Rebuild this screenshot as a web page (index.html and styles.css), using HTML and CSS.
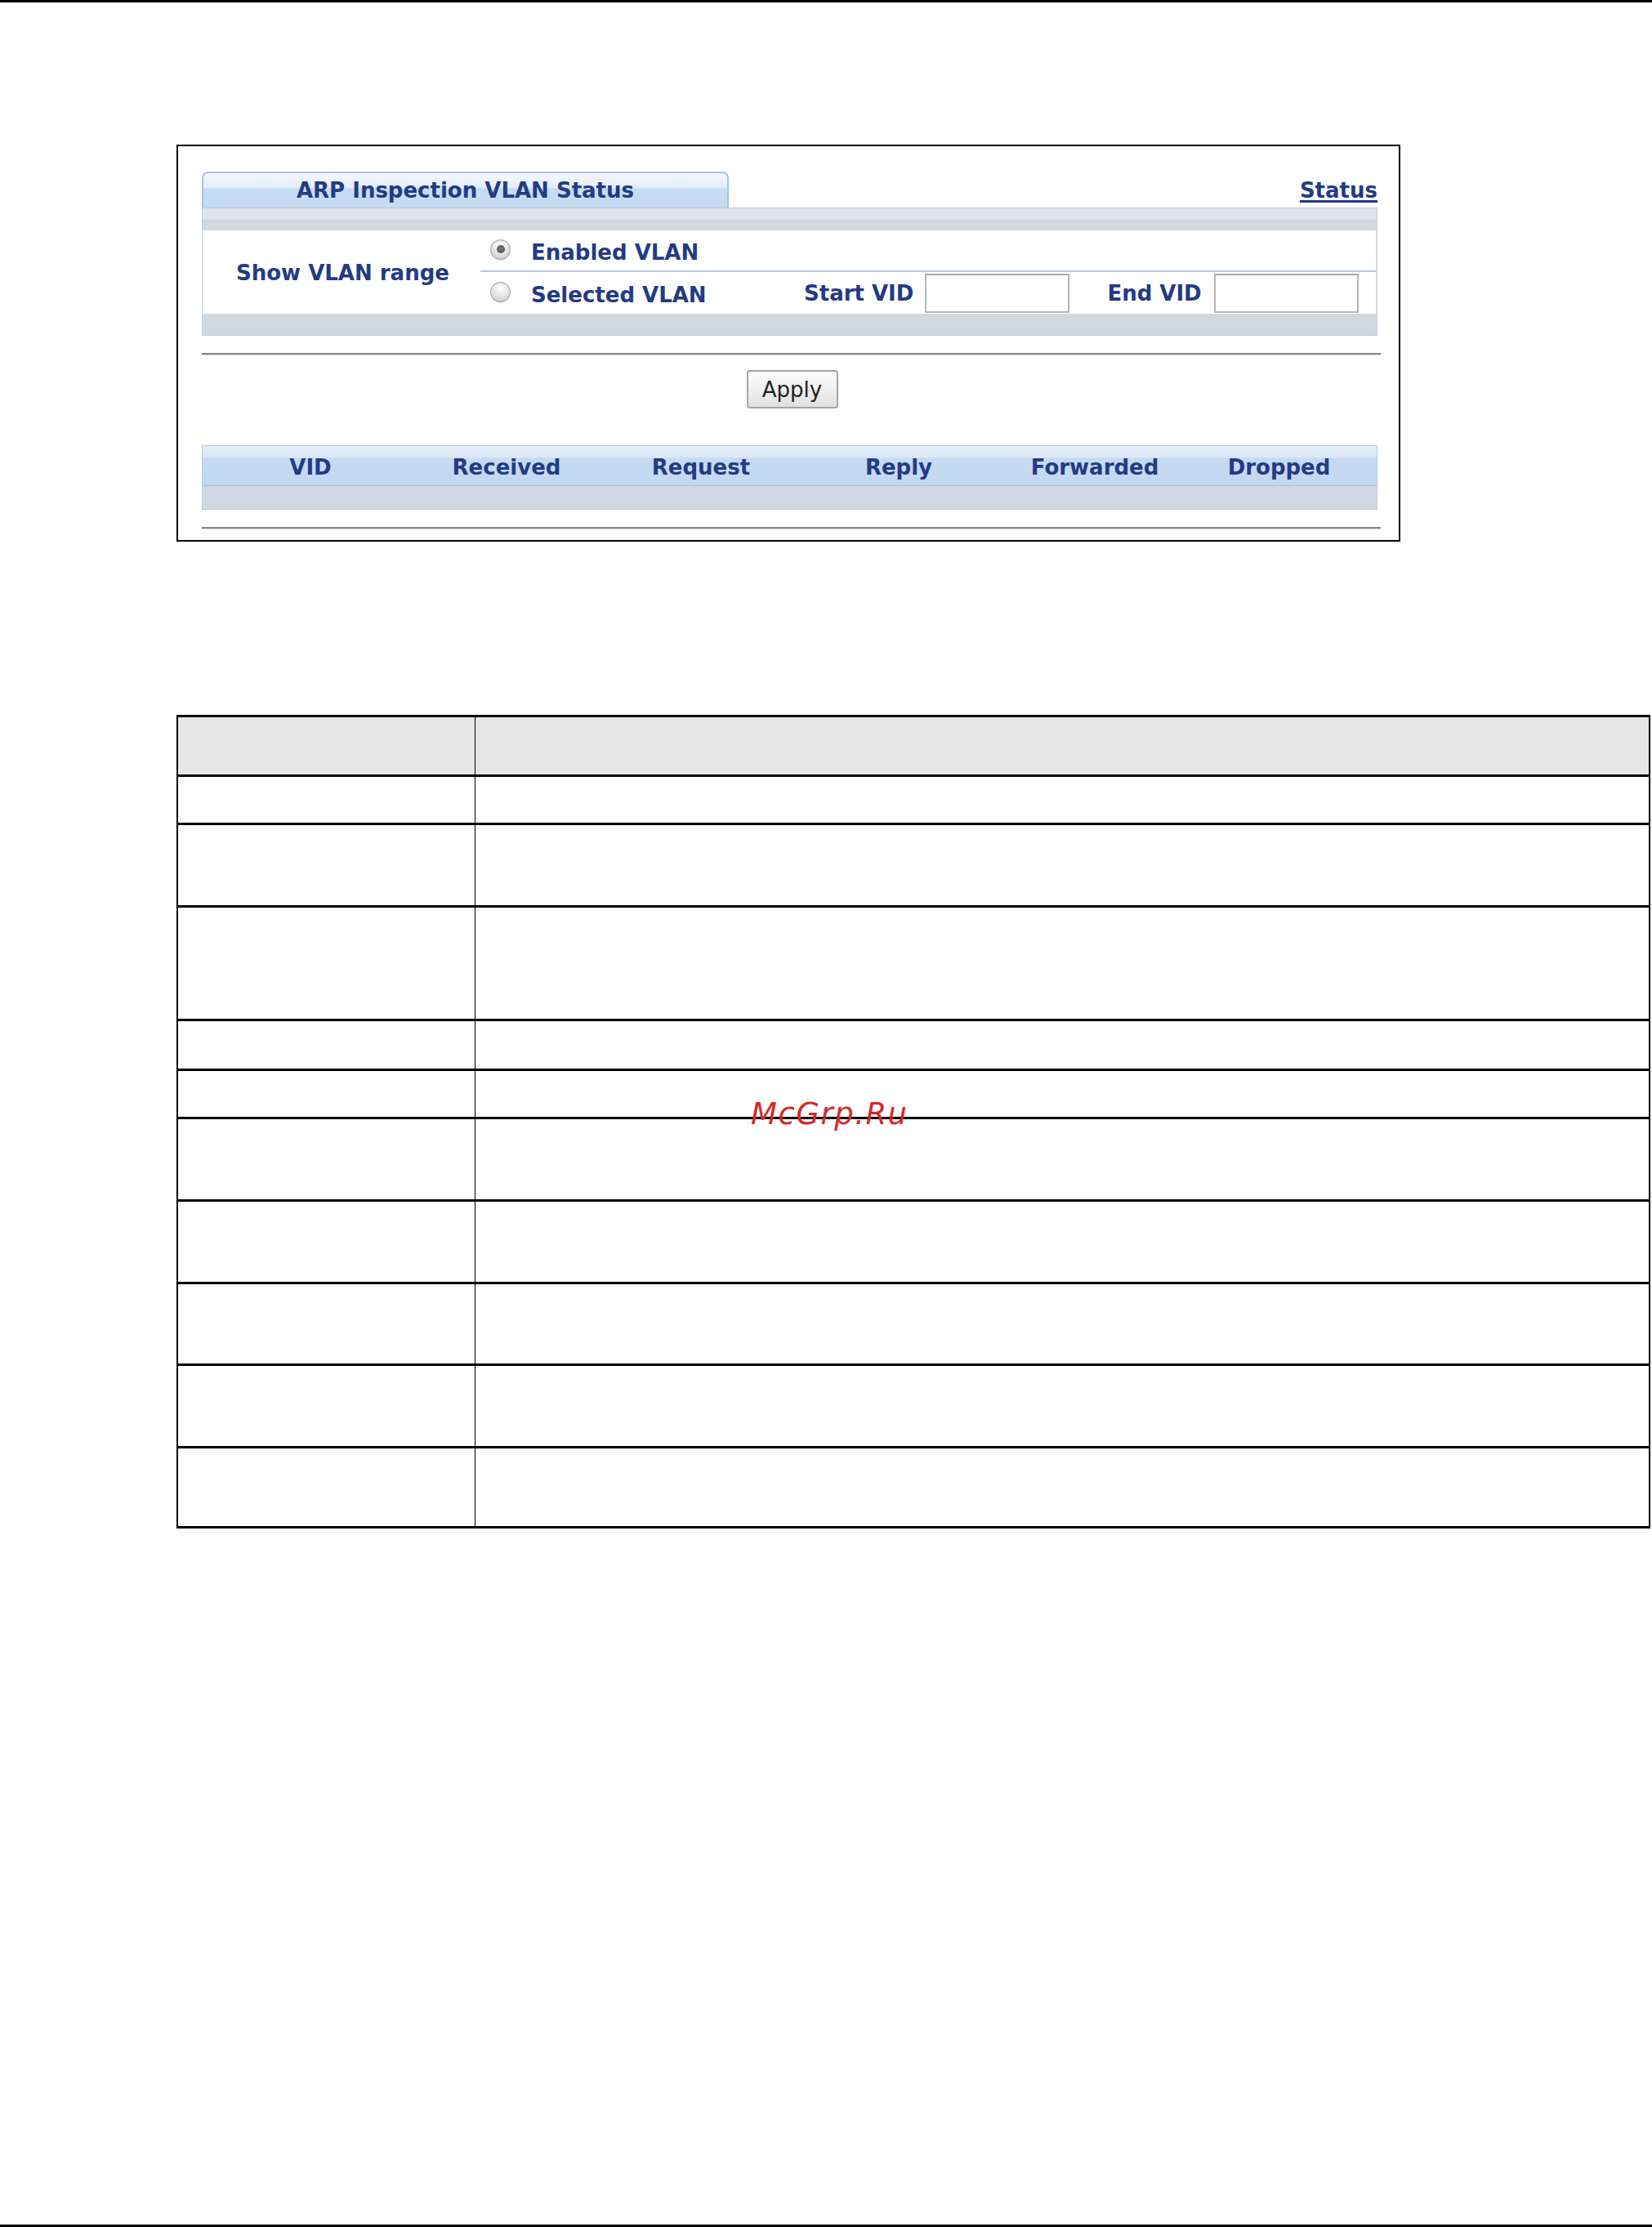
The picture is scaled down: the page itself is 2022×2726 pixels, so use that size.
FILE: index.html
```html
<!DOCTYPE html>
<html lang="en">
<head>
<meta charset="utf-8">
<title>ARP Inspection VLAN Status</title>
<link rel="stylesheet" href="styles.css">
</head>
<body>
<div class="page">
  <div class="top-rule"></div>

  <div class="shot">
    <div class="tabrow">
      <div class="tab">ARP Inspection VLAN Status</div>
      <a class="status-link" href="#">Status</a>
    </div>
    <div class="band"></div>
    <div class="form">
      <div class="form-label">Show VLAN range</div>
      <div class="form-opts">
        <div class="opt opt-first">
          <span class="radio on"></span>
          <span class="opt-text">Enabled VLAN</span>
        </div>
        <div class="opt opt-second">
          <span class="radio"></span>
          <span class="opt-text wide">Selected VLAN</span>
          <span class="field-label">Start VID</span>
          <span class="input"></span>
          <span class="field-label end">End VID</span>
          <span class="input"></span>
        </div>
      </div>
    </div>
    <div class="band-bottom"></div>
    <div class="rule"></div>
    <div class="actions"><button class="btn" type="button">Apply</button></div>
    <div class="list-head">
      <div class="col">VID</div>
      <div class="col">Received</div>
      <div class="col">Request</div>
      <div class="col">Reply</div>
      <div class="col">Forwarded</div>
      <div class="col last">Dropped</div>
    </div>
    <div class="list-empty"></div>
    <div class="rule rule-end"></div>
  </div>

  <div class="doc-table">
    <div class="row head h73"><div class="cell"></div><div class="cell"></div></div>
    <div class="row h59"><div class="cell"></div><div class="cell"></div></div>
    <div class="row h101"><div class="cell"></div><div class="cell"></div></div>
    <div class="row h139"><div class="cell"></div><div class="cell"></div></div>
    <div class="row h61"><div class="cell"></div><div class="cell"></div></div>
    <div class="row h59"><div class="cell"></div><div class="cell"></div></div>
    <div class="row h101"><div class="cell"></div><div class="cell"></div></div>
    <div class="row h101"><div class="cell"></div><div class="cell"></div></div>
    <div class="row h100"><div class="cell"></div><div class="cell"></div></div>
    <div class="row h101"><div class="cell"></div><div class="cell"></div></div>
    <div class="row h98"><div class="cell"></div><div class="cell"></div></div>
    <div class="watermark">McGrp.Ru</div>
  </div>

  <div class="bottom-rule"></div>
</div>
</body>
</html>
```

FILE: styles.css
```css
html, body {
  margin: 0;
  padding: 0;
  background: #ffffff;
}

.page {
  height: 2726px;
  display: flex;
  flex-direction: column;
  overflow: hidden;
  font-family: "DejaVu Sans", Verdana, sans-serif;
}

.top-rule {
  height: 3px;
  background: #000;
  flex: none;
}

.bottom-rule {
  height: 3px;
  background: #000;
  margin-top: auto;
  flex: none;
}

/* ---------- embedded UI screenshot ---------- */
.shot {
  flex: none;
  margin-top: 174px;
  margin-left: 216px;
  width: 1498px;
  box-sizing: border-box;
  border: 2px solid #000;
  padding: 31px 26px 13px 29px;
  color: #233b84;
  font-size: 26px;
  font-weight: bold;
}

.tabrow {
  display: flex;
  justify-content: space-between;
  align-items: flex-end;
  height: 44px;
}

.tab {
  width: 645px;
  height: 44px;
  box-sizing: border-box;
  border: 2px solid #a9c3e3;
  border-bottom: 0;
  border-radius: 8px 8px 0 0;
  background: linear-gradient(to bottom, #f6f9fd 0%, #e2ecf8 42%, #c7dcf4 46%, #c5daf3 100%);
  text-align: center;
  line-height: 40px;
  padding-top: 1px;
  white-space: nowrap;
}

.status-link {
  color: #233b84;
  text-decoration: underline;
  text-decoration-thickness: 3px;
  text-underline-offset: 3px;
  line-height: 40px;
  margin-bottom: 1px;
}

.band {
  height: 28px;
  box-sizing: border-box;
  border: 1px solid #c3ccd8;
  border-bottom: 0;
  background: linear-gradient(to bottom, #dfe4eb 0%, #dfe4eb 48%, #d0d8e2 52%, #d0d8e2 100%);
}

.form {
  display: flex;
  height: 102px;
  box-sizing: border-box;
  border-left: 1px solid #c8d1dc;
  border-right: 2px solid #d3dae3;
  background: #fff;
}

.form-label {
  width: 340px;
  box-sizing: border-box;
  padding-left: 41px;
  padding-top: 2px;
  display: flex;
  align-items: center;
  white-space: nowrap;
}

.form-opts {
  flex: 1;
  display: flex;
  flex-direction: column;
}

.opt {
  display: flex;
  align-items: center;
  padding-left: 12px;
  box-sizing: border-box;
  white-space: nowrap;
}

.opt-first {
  height: 51px;
  border-bottom: 2px solid #b8c7da;
}

.opt-second {
  height: 51px;
}

.opt-text {
  margin-left: 25px;
  line-height: 30px;
  padding-top: 4px;
}

.opt-text.wide {
  flex: 0 0 334px;
}

.radio {
  flex: none;
  width: 25px;
  height: 25px;
  box-sizing: border-box;
  border-radius: 50%;
  border: 1px solid #9c9c9c;
  background: radial-gradient(circle at 50% 30%, #ffffff 0%, #e6e6e6 45%, #c6c6c6 100%);
  box-shadow: 0 1px 1px rgba(0, 0, 0, 0.12);
  position: relative;
  margin-top: -3px;
}

.radio.on::after {
  content: "";
  position: absolute;
  left: 6.5px;
  top: 6.5px;
  width: 10px;
  height: 10px;
  border-radius: 50%;
  background: radial-gradient(circle at 50% 40%, #777 0%, #4a4a4a 100%);
}

.field-label {
  line-height: 30px;
}

.field-label.end {
  margin-left: 46px;
}

.input {
  flex: none;
  width: 177px;
  height: 48px;
  box-sizing: border-box;
  border: 2px solid #b5b5b5;
  border-top-color: #a8a8a8;
  background: #fff;
  margin-left: 14px;
}

.field-label.end + .input {
  margin-left: 15px;
}

.band-bottom {
  height: 27px;
  box-sizing: border-box;
  border: 1px solid #c3ccd8;
  border-top: 0;
  background: #d0d8e2;
}

.rule {
  margin-top: 21px;
  margin-right: -4px;
  height: 0;
  border-top: 2px solid #8a8a8a;
  border-bottom: 1px solid #cfcfcf;
}

.actions {
  display: flex;
  justify-content: center;
  padding-left: 6px;
  margin-top: 18px;
}

.btn {
  width: 112px;
  height: 47px;
  box-sizing: border-box;
  border: 2px solid #a4a4a4;
  border-radius: 4px;
  background: linear-gradient(to bottom, #fbfbfb 0%, #f0f0f0 50%, #e0e0e0 100%);
  font-family: "DejaVu Sans", Verdana, sans-serif;
  font-size: 26px;
  font-weight: normal;
  color: #222;
  padding: 0;
  line-height: 40px;
}

.list-head {
  margin-top: 45px;
  height: 50px;
  box-sizing: border-box;
  border: 1px solid #b6c9e1;
  border-bottom: 1px solid #a9bcd5;
  background: linear-gradient(to bottom, #e3ecf8 0%, #dbe7f6 28%, #c6daf2 32%, #c3d7f0 100%);
  display: grid;
  grid-template-columns: 264px 216px 260px 224px 256px 1fr;
  align-items: center;
}

.col {
  text-align: center;
  white-space: nowrap;
  line-height: 30px;
  padding-top: 4px;
}

.col.last {
  padding-right: 22px;
}

.list-empty {
  height: 29px;
  box-sizing: border-box;
  border: 1px solid #c3ccd8;
  border-top: 0;
  background: #d0d8e2;
}

.rule-end {
  margin-top: 21px;
}

/* ---------- document table ---------- */
.doc-table {
  flex: none;
  position: relative;
  margin-top: 212px;
  margin-left: 216px;
  width: 1804px;
  box-sizing: border-box;
  border-top: 3px solid #000;
  border-left: 2px solid #000;
  border-right: 2px solid #000;
}

.row {
  display: grid;
  grid-template-columns: 364px 1fr;
  box-sizing: border-box;
  border-bottom: 3px solid #000;
}

.row.head {
  background: #e6e6e6;
}

.cell:first-child {
  border-right: 1px solid #000;
}

.h59 { height: 59px; }
.h61 { height: 61px; }
.h73 { height: 73px; }
.h98 { height: 98px; }
.h100 { height: 100px; }
.h101 { height: 101px; }
.h139 { height: 139px; }

.watermark {
  position: absolute;
  left: 701px;
  top: 467px;
  font-family: "DejaVu Sans", sans-serif;
  font-style: italic;
  font-size: 37px;
  letter-spacing: 1.5px;
  line-height: 1;
  color: #d42828;
  white-space: nowrap;
}
```
